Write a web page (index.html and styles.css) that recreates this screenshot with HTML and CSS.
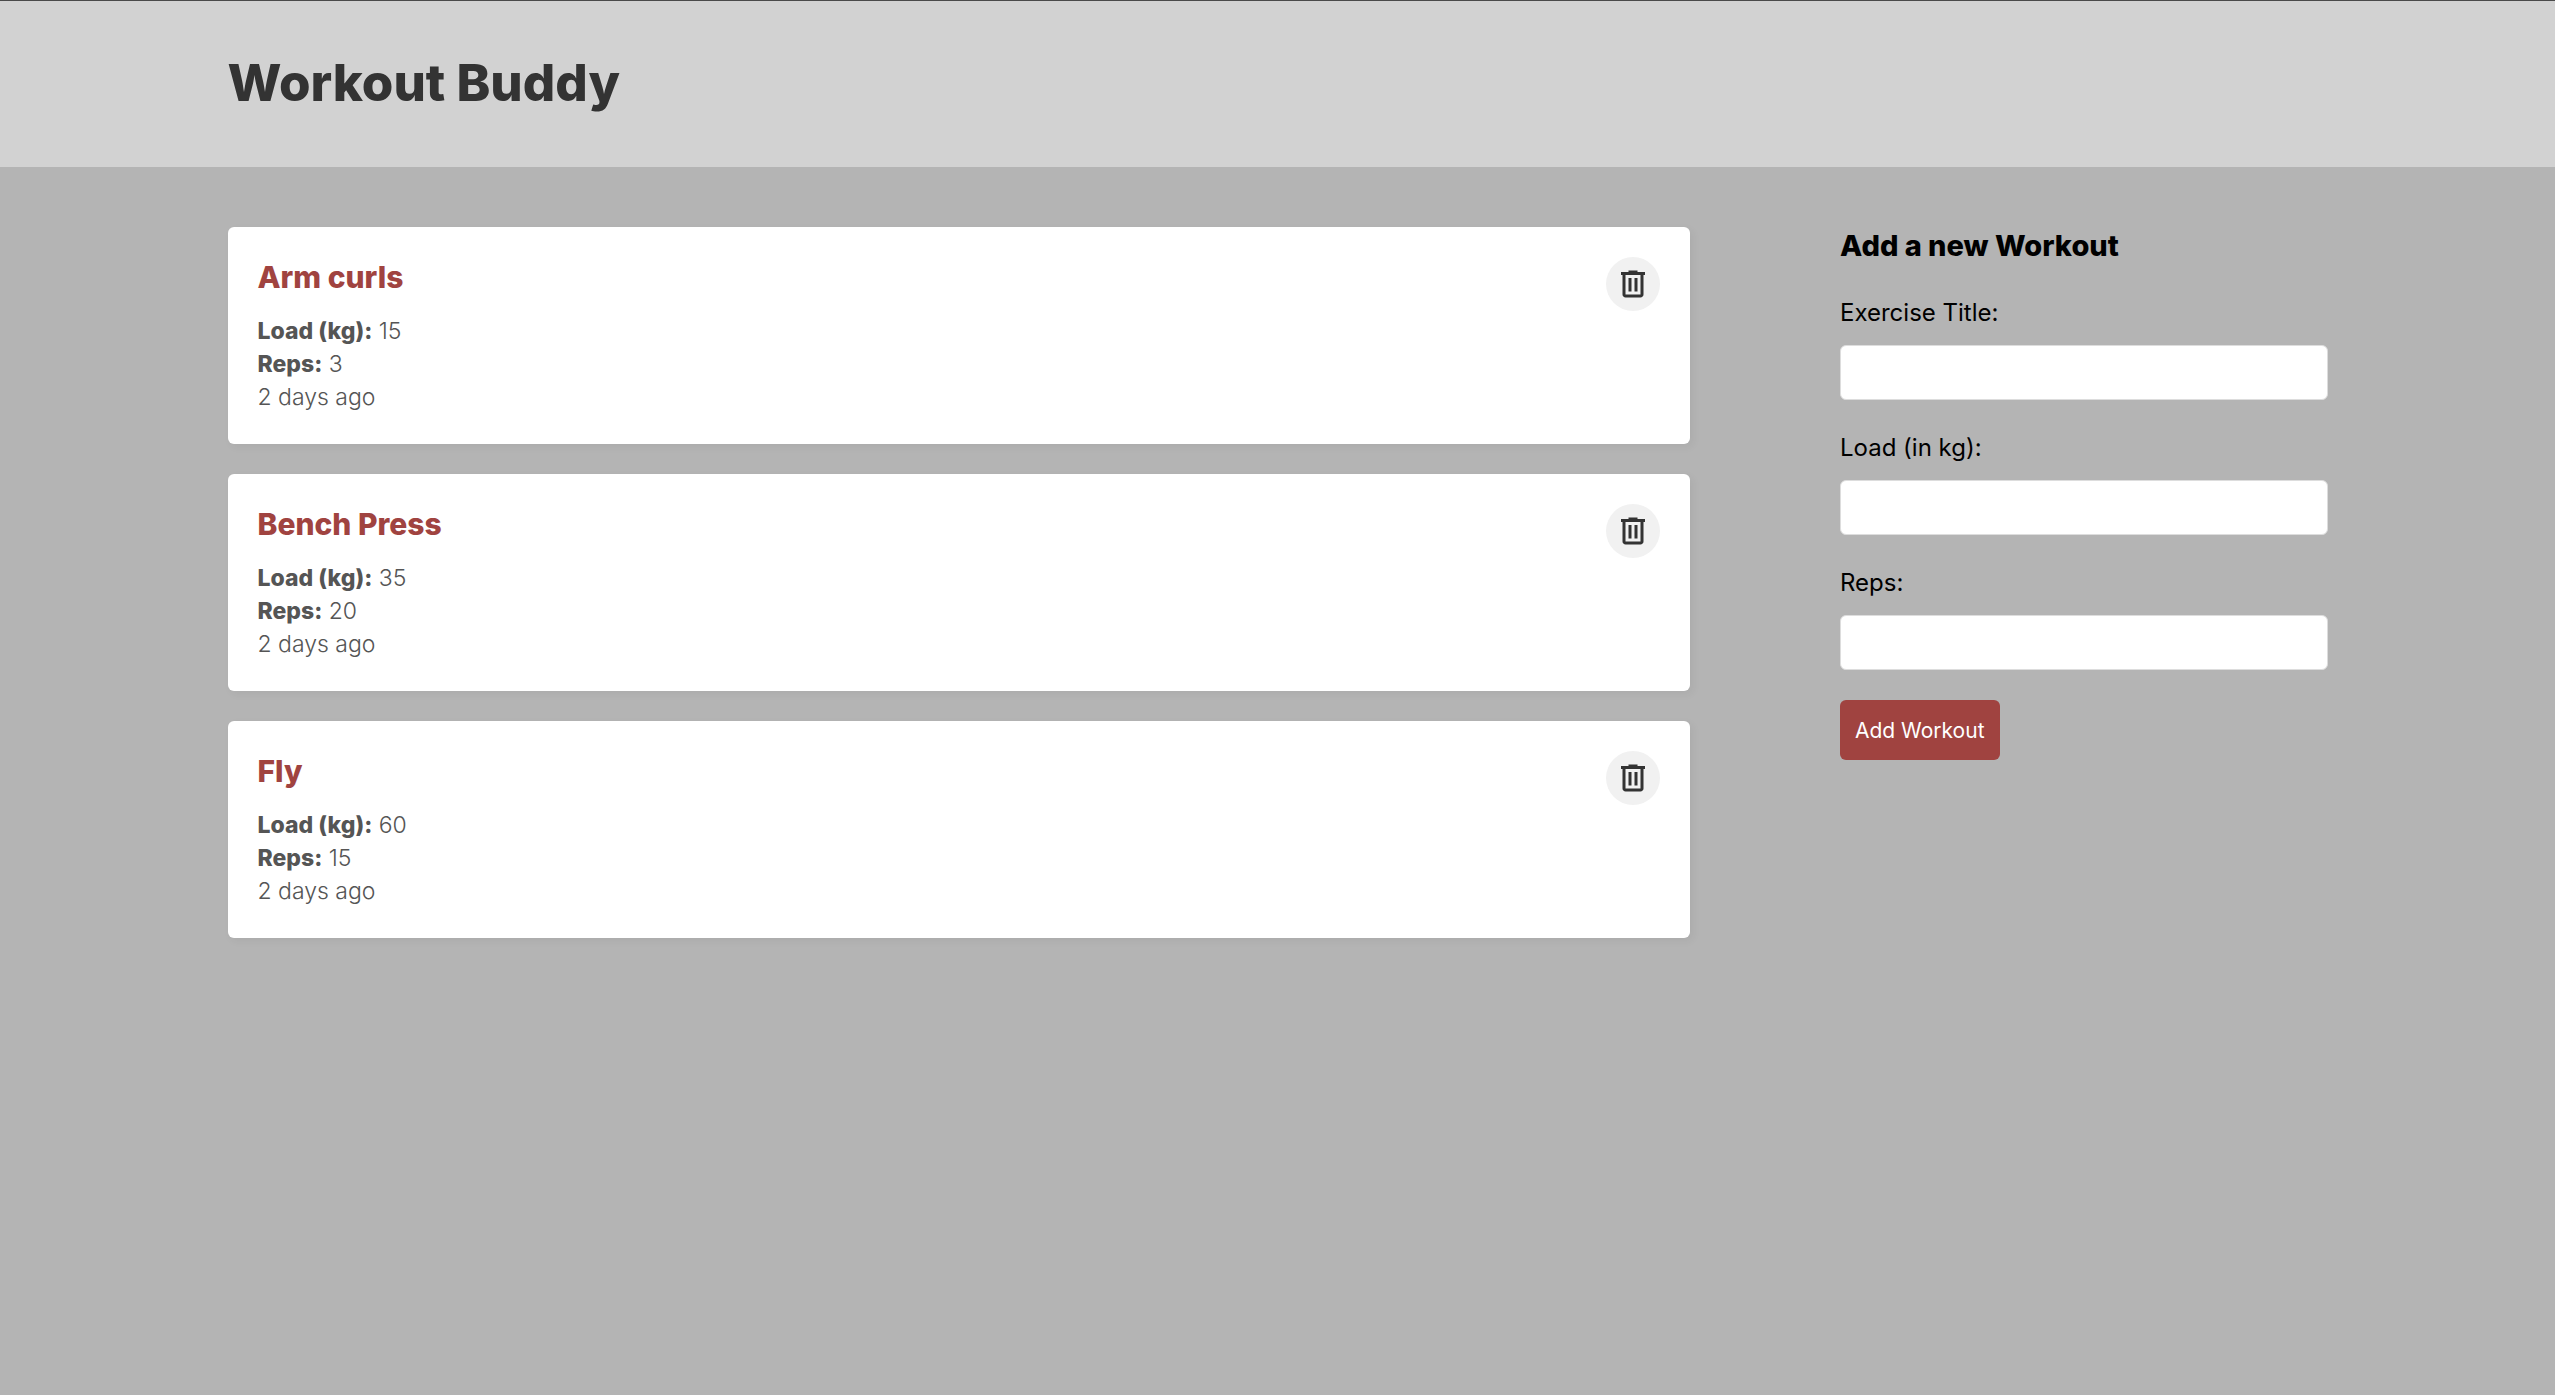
FILE: index.html
```html
<!DOCTYPE html>
<html lang="en">
<head>
  <meta charset="utf-8">
  <meta name="viewport" content="width=device-width, initial-scale=1">
  <title>Workout Buddy</title>
  <link rel="stylesheet" href="styles.css">
</head>
<body>
  <svg class="sprite" aria-hidden="true">
    <symbol id="trash" viewBox="0 0 24 24">
      <path d="M7 21q-.825 0-1.412-.587T5 19V6H4V4h5V3h6v1h5v2h-1v13q0 .825-.587 1.413T17 21zM17 6H7v13h10zM9 17h2V8H9zm4 0h2V8h-2z"/>
    </symbol>
  </svg>
  <header class="site-header">
    <div class="container">
      <h1 class="brand"><a href="#">Workout Buddy</a></h1>
    </div>
  </header>
  <main class="container home">
    <section class="workouts" aria-label="Workouts">
      <article class="workout">
        <div class="details">
          <h2 class="workout-title">Arm curls</h2>
          <p><strong>Load (kg):</strong> 15</p>
          <p><strong>Reps:</strong> 3</p>
          <p>2 days ago</p>
        </div>
        <button class="delete" type="button" aria-label="Delete Arm curls"><svg class="icon"><use href="#trash"/></svg></button>
      </article>
      <article class="workout">
        <div class="details">
          <h2 class="workout-title">Bench Press</h2>
          <p><strong>Load (kg):</strong> 35</p>
          <p><strong>Reps:</strong> 20</p>
          <p>2 days ago</p>
        </div>
        <button class="delete" type="button" aria-label="Delete Bench Press"><svg class="icon"><use href="#trash"/></svg></button>
      </article>
      <article class="workout">
        <div class="details">
          <h2 class="workout-title">Fly</h2>
          <p><strong>Load (kg):</strong> 60</p>
          <p><strong>Reps:</strong> 15</p>
          <p>2 days ago</p>
        </div>
        <button class="delete" type="button" aria-label="Delete Fly"><svg class="icon"><use href="#trash"/></svg></button>
      </article>
    </section>
    <form class="create">
      <h2 class="form-title">Add a new Workout</h2>
      <label for="title">Exercise Title:</label>
      <input id="title" type="text">
      <label for="load">Load (in kg):</label>
      <input id="load" type="number">
      <label for="reps">Reps:</label>
      <input id="reps" type="number">
      <button class="submit" type="submit">Add Workout</button>
    </form>
  </main>
</body>
</html>
```
FILE: styles.css
```css
* {
  box-sizing: border-box;
  margin: 0;
}

body {
  min-height: 100vh;
  background: #b4b4b4;
  color: #000;
  font-family: Inter, "Open Sans", sans-serif;
}

.sprite {
  position: absolute;
  width: 0;
  height: 0;
}

.container {
  width: 100%;
  max-width: 2100px;
  margin: 0 auto;
}

.site-header {
  padding: 46px 0 48px;
  border-top: 1px solid #4a4a4a;
  background: #d2d2d2;
}

.brand {
  font-size: 51px;
  font-weight: 800;
  line-height: 72px;
}

.brand a {
  color: #333;
  text-decoration: none;
}

.home {
  display: grid;
  grid-template-columns: 3fr 1fr;
  gap: 150px;
  padding-top: 60px;
}

.workouts {
  display: flex;
  flex-direction: column;
  gap: 30px;
}

.workout {
  display: flex;
  justify-content: space-between;
  align-items: flex-start;
  padding: 30px;
  border-radius: 6px;
  background: #fff;
  box-shadow: 3px 3px 8px rgba(0, 0, 0, 0.05);
}

.workout-title {
  margin-bottom: 18px;
  color: #a04340;
  font-size: 30px;
  font-weight: 800;
  line-height: 40px;
}

.details p {
  color: #555;
  font-size: 23px;
  font-weight: 300;
  line-height: 33px;
}

.details strong {
  font-weight: 800;
}

.delete {
  display: flex;
  align-items: center;
  justify-content: center;
  width: 54px;
  height: 54px;
  padding: 0;
  border: 0;
  border-radius: 50%;
  background: #f1f1f1;
  color: #333;
  cursor: pointer;
}

.icon {
  width: 36px;
  height: 36px;
  fill: currentColor;
}

.form-title {
  margin-bottom: 30px;
  font-size: 29px;
  font-weight: 800;
  line-height: 38px;
}

.create label {
  display: block;
  font-size: 24px;
  line-height: 35px;
}

.create input {
  display: block;
  width: 100%;
  height: 55px;
  margin: 15px 0 30px;
  padding: 15px;
  border: 1px solid #ddd;
  border-radius: 6px;
  background: #fff;
  font: inherit;
  font-size: 23px;
}

.submit {
  height: 60px;
  padding: 0 15px;
  border: 0;
  border-radius: 6px;
  background: #a04340;
  color: #fff;
  font: inherit;
  font-size: 21px;
  cursor: pointer;
}
```
